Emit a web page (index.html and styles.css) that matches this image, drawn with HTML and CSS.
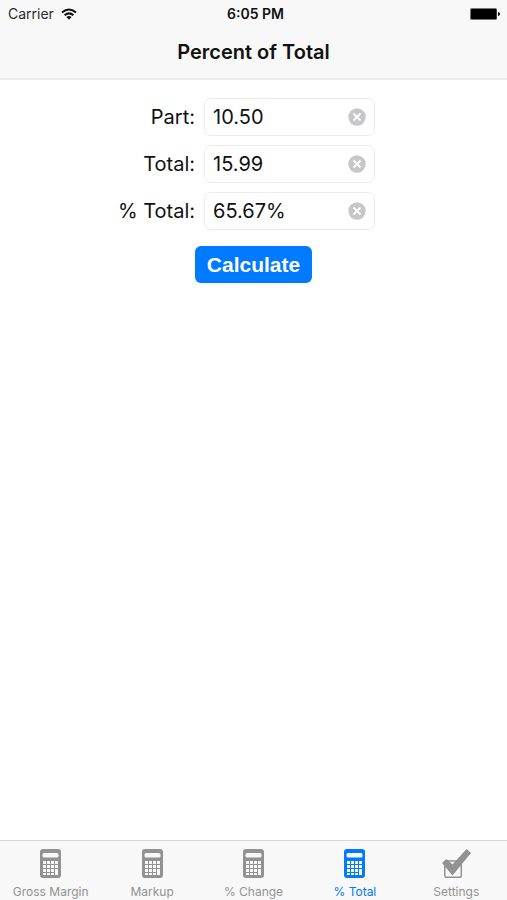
FILE: index.html
```html
<!DOCTYPE html>
<html lang="en">
<head>
<meta charset="utf-8">
<meta name="viewport" content="width=device-width, initial-scale=1">
<title>Percent of Total</title>
<link rel="stylesheet" href="styles.css">
</head>
<body>
<svg class="defs" aria-hidden="true">
  <symbol id="calculator" viewBox="0 0 21 29">
    <path fill="currentColor" fill-rule="evenodd" d="M3 0H18Q21 0 21 3V26Q21 29 18 29H3Q0 29 0 26V3Q0 0 3 0ZM4 4Q2.500 4 2.500 5.500V7Q2.500 8.500 4 8.500H17Q18.500 8.500 18.500 7V5.500Q18.500 4 17 4ZM3 12V15H6V12ZM7 12V15H10V12ZM11 12V15H14V12ZM15 12V15H18V12ZM3 16V19H6V16ZM7 16V19H10V16ZM11 16V19H14V16ZM15 16V19H18V16ZM3 20V23H6V20ZM7 20V23H10V20ZM11 20V23H14V20ZM15 20V26H18V20ZM3 24V26H6V24ZM7 24V26H10V24ZM11 24V26H14V24Z"/>
  </symbol>
  <symbol id="clear" viewBox="0 0 18 18">
    <circle cx="9" cy="9" r="8.700" fill="#c7c7c9"/>
    <path d="M5.500 5.500L12.500 12.500M12.500 5.500L5.500 12.500" stroke="#fff" stroke-width="1.800"/>
  </symbol>
</svg>
<header class="top">
  <div class="status">
    <div class="carrier">Carrier
      <svg class="wifi" viewBox="0 0 16 12" aria-hidden="true"><g fill="none" stroke="#111" stroke-width="2"><path d="M1 4.600Q8 -1.600 15 4.600"/><path d="M3.600 7.300Q8 3.400 12.400 7.300"/></g><path fill="#111" d="M5.400 9Q8 6.900 10.600 9L8 11.700Z"/></svg>
    </div>
    <time class="clock">6:05 PM</time>
    <svg class="battery" viewBox="0 0 30 12" aria-hidden="true"><rect width="27" height="12" rx="1.500" fill="#777"/><rect x="1" y="1" width="25.500" height="10" rx="1"/><path d="M28 4Q30 4.500 30 6T28 8Z"/></svg>
  </div>
  <h1 class="title">Percent of Total</h1>
</header>
<main class="content">
  <form class="form">
    <label class="label" for="part">Part:</label>
    <div class="field"><input class="input" id="part" type="text" value="10.50"><button class="clear" type="button" aria-label="Clear part"><svg class="clear-icon"><use href="#clear"/></svg></button></div>
    <label class="label" for="total">Total:</label>
    <div class="field"><input class="input" id="total" type="text" value="15.99"><button class="clear" type="button" aria-label="Clear total"><svg class="clear-icon"><use href="#clear"/></svg></button></div>
    <label class="label" for="percent">% Total:</label>
    <div class="field"><input class="input" id="percent" type="text" value="65.67%"><button class="clear" type="button" aria-label="Clear percent"><svg class="clear-icon"><use href="#clear"/></svg></button></div>
    <button class="calculate" type="button">Calculate</button>
  </form>
</main>
<nav class="tabs">
  <a class="tab" href="#margin"><svg class="tab-icon"><use href="#calculator"/></svg>Gross Margin</a>
  <a class="tab" href="#markup"><svg class="tab-icon"><use href="#calculator"/></svg>Markup</a>
  <a class="tab" href="#change"><svg class="tab-icon"><use href="#calculator"/></svg>% Change</a>
  <a class="tab active" href="#total" aria-current="page"><svg class="tab-icon"><use href="#calculator"/></svg>% Total</a>
  <a class="tab" href="#settings"><svg class="tab-icon check" viewBox="0 0 29 29" aria-hidden="true"><rect x="2.800" y="12" width="16.500" height="16.300" rx="1.500" fill="none" stroke="currentColor" stroke-width="1.500"/><path fill="currentColor" d="M0 14L4.500 10L10.500 15.500L24.500 0L29 4L10.500 26.500Z"/></svg>Settings</a>
</nav>
</body>
</html>
```
FILE: styles.css
```css
* { box-sizing: border-box; }
body {
  margin: 0;
  min-height: 100vh;
  display: flex;
  flex-direction: column;
  background: #fff;
  color: #111;
  font-family: Inter, "Liberation Sans", sans-serif;
}
.defs { position: absolute; width: 0; height: 0; }
.top {
  background: #f8f8f8;
  border-bottom: 2px solid #ebebeb;
  padding-bottom: 10px;
}
.status {
  display: grid;
  grid-template-columns: 1fr auto 1fr;
  align-items: center;
  height: 27px;
  padding: 0 7px 0 8px;
  font-size: 14px;
}
.carrier { display: flex; align-items: center; gap: 7px; color: #2a2a2a; }
.wifi { width: 16px; height: 12px; }
.clock { padding-left: 3px; font-size: 14px; font-weight: 600; }
.battery { width: 30px; height: 12px; justify-self: end; }
.title {
  margin: 0;
  padding-top: 9px;
  text-align: center;
  font-size: 20px;
  line-height: 32px;
  font-weight: 600;
}
.content { flex: 1; padding-top: 18px; }
.form {
  display: grid;
  grid-template-columns: 195fr 171px 123fr;
  column-gap: 9px;
  row-gap: 9px;
  align-items: center;
}
.label { grid-column: 1; text-align: right; font-size: 20px; }
.field {
  grid-column: 2;
  display: flex;
  align-items: center;
  height: 38px;
  padding: 0 8px;
  border: 1px solid #ececec;
  border-radius: 7px;
}
.input {
  flex: 1;
  min-width: 0;
  padding: 0;
  border: 0;
  outline: 0;
  background: transparent;
  color: inherit;
  font: inherit;
  font-size: 20px;
}
.clear { display: flex; padding: 0; border: 0; background: none; }
.clear-icon { width: 18px; height: 18px; }
.calculate {
  grid-column: 1 / -1;
  justify-self: center;
  height: 37px;
  margin-top: 7px;
  padding: 0 12px;
  border: 0;
  border-radius: 6px;
  background: #007aff;
  color: #fff;
  font: bold 21px "Liberation Sans", sans-serif;
}
.tabs {
  display: grid;
  grid-template-columns: repeat(5, 1fr);
  height: 60px;
  border-top: 1px solid #d4d4d4;
  background: #f8f8f8;
}
.tab {
  display: flex;
  flex-direction: column;
  align-items: center;
  gap: 6px;
  padding-top: 8px;
  color: #929292;
  font-size: 12px;
  line-height: 16px;
  white-space: nowrap;
  text-decoration: none;
}
.tab-icon { width: 21px; height: 29px; }
.check { width: 29px; }
.active { color: #007aff; }
```
